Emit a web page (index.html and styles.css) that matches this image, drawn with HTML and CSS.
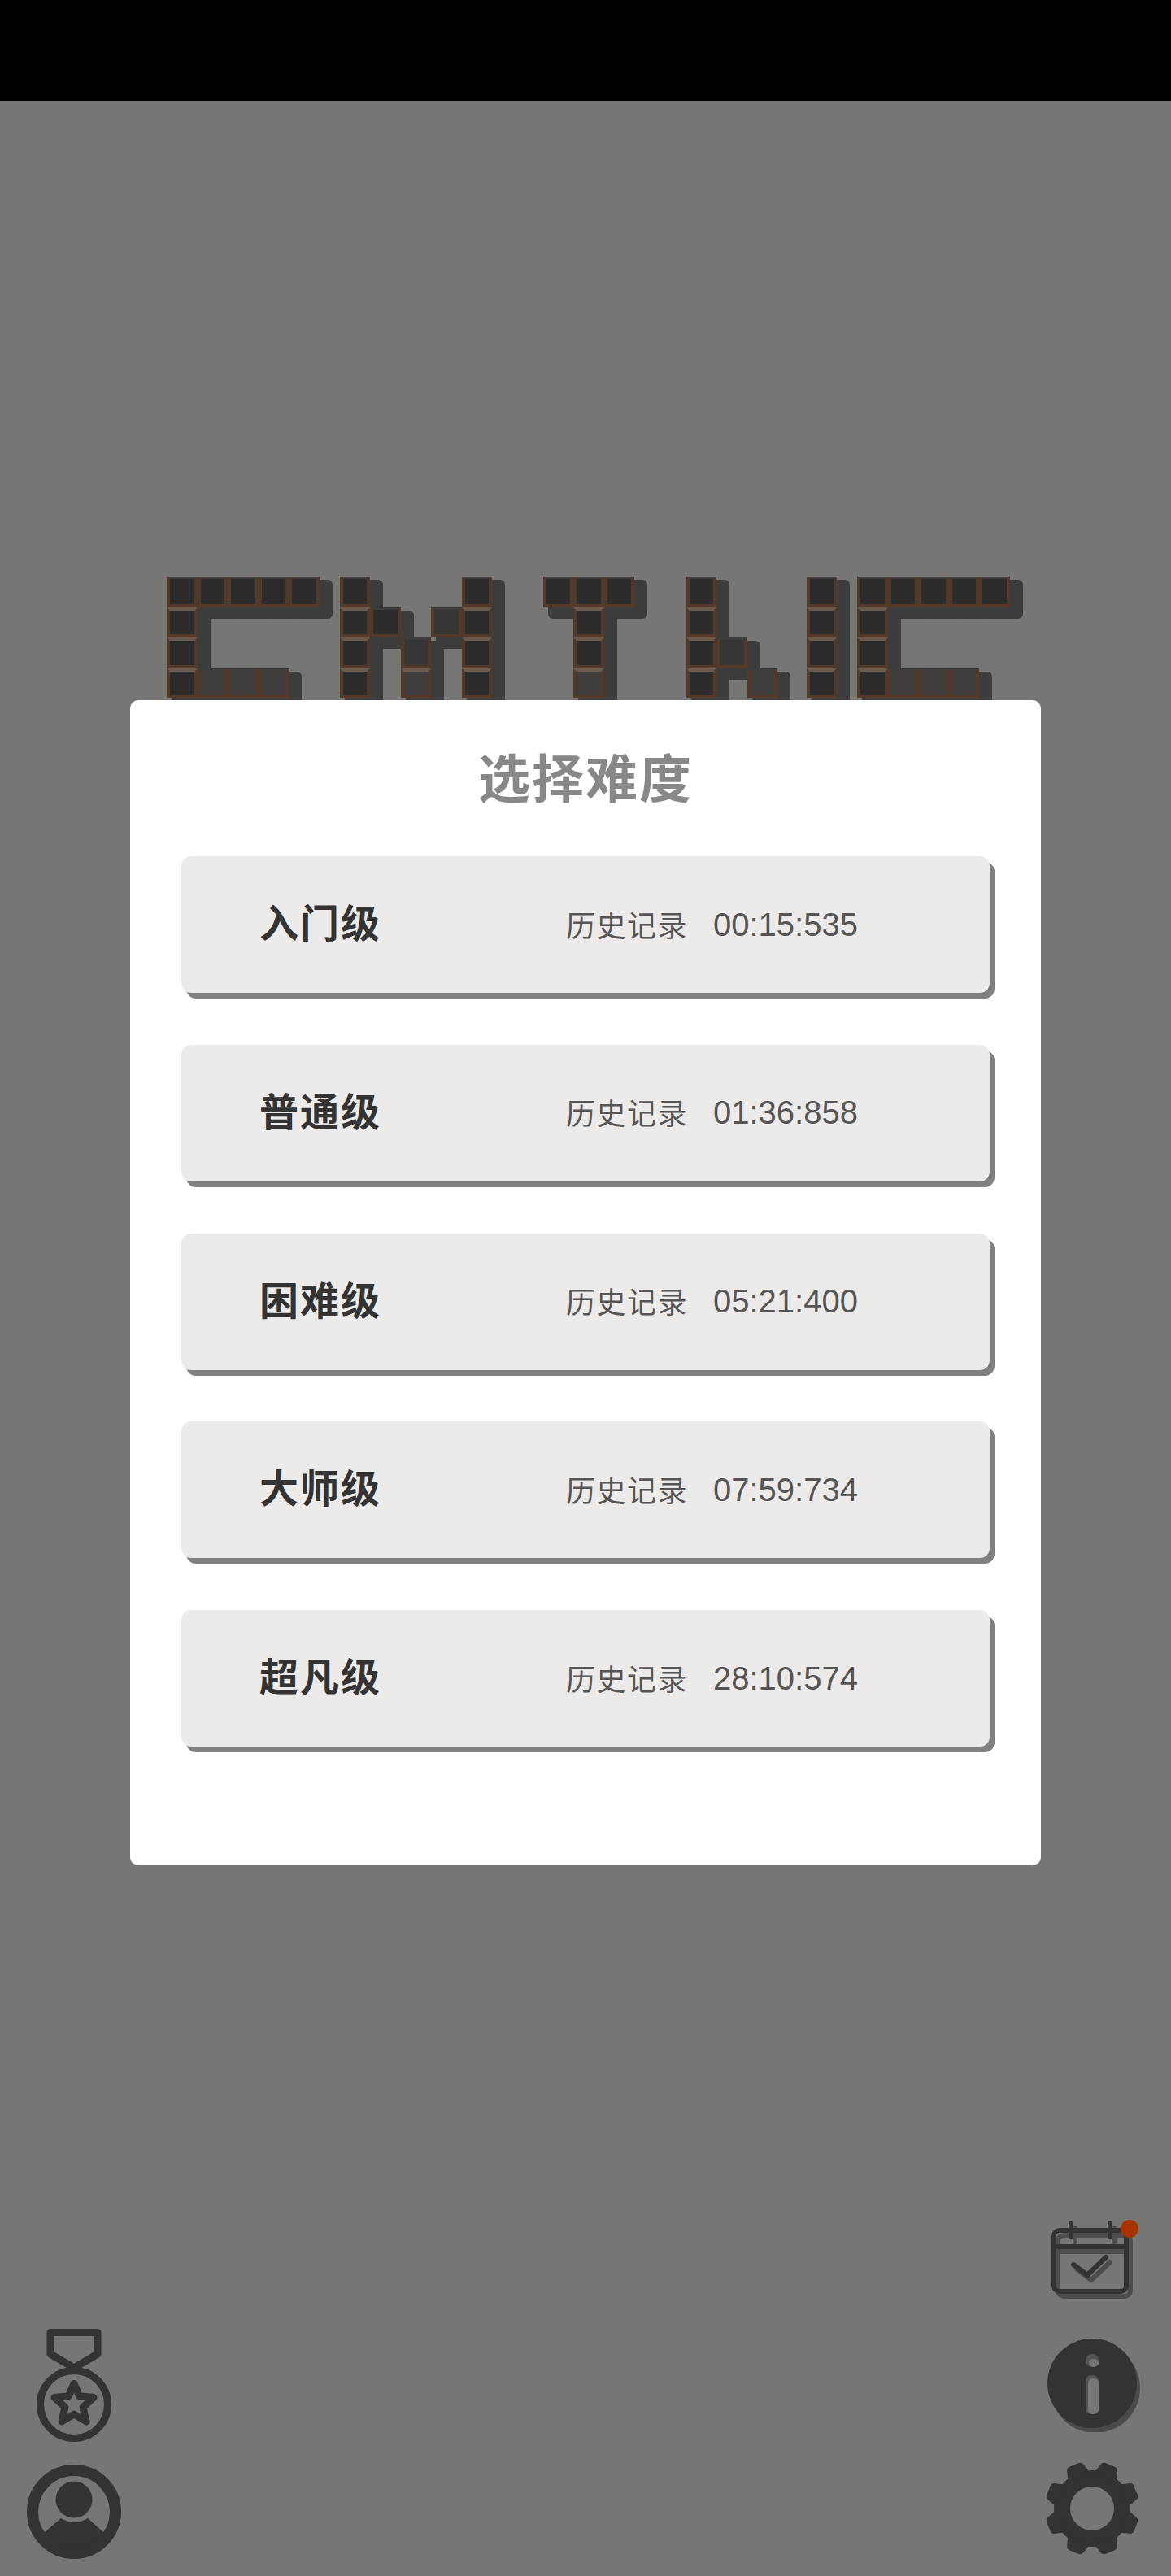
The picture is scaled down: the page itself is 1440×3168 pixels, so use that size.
FILE: index.html
```
<!DOCTYPE html>
<html lang="zh">
<head>
<meta charset="utf-8">
<title>选择难度</title>
<link rel="stylesheet" href="styles.css">
</head>
<body>
<div class="stage">
  <div class="statusbar"></div>

  <div class="logo">
    <div class="letter cols5">
      <b class="t"></b><b class="t"></b><b class="t"></b><b class="t"></b><b class="t"></b>
      <b class="t s"></b><i></i><i></i><i></i><i></i>
      <b class="t s"></b><i></i><i></i><i></i><i></i>
      <b class="t s"></b><b class="t l"></b><b class="t l"></b><b class="t l"></b><i></i>
    </div>
    <div class="letter cols5 m">
      <b class="t"></b><i></i><i></i><i></i><b class="t"></b>
      <b class="t s"></b><b class="t"></b><i></i><b class="t m2"></b><b class="t s"></b>
      <b class="t s"></b><i></i><b class="t m2"></b><i></i><b class="t s"></b>
      <b class="t s"></b><i></i><b class="t l s"></b><i></i><b class="t s"></b>
    </div>
    <div class="letter cols3 tt">
      <b class="t"></b><b class="t"></b><b class="t"></b>
      <i></i><b class="t s"></b><i></i>
      <i></i><b class="t s"></b><i></i>
      <i></i><b class="t l s"></b><i></i>
    </div>
    <div class="letter cols3 k">
      <b class="t"></b><i></i><i></i>
      <b class="t s"></b><i></i><i></i>
      <b class="t s"></b><b class="t m2"></b><i></i>
      <b class="t s"></b><i></i><b class="t l"></b>
    </div>
    <div class="letter cols1 ii">
      <b class="t"></b>
      <b class="t s"></b>
      <b class="t s"></b>
      <b class="t s"></b>
    </div>
    <div class="letter cols5">
      <b class="t"></b><b class="t"></b><b class="t"></b><b class="t"></b><b class="t"></b>
      <b class="t s"></b><i></i><i></i><i></i><i></i>
      <b class="t s"></b><i></i><i></i><i></i><i></i>
      <b class="t s"></b><b class="t l"></b><b class="t l"></b><b class="t l"></b><i></i>
    </div>
  </div>

  <div class="dock">
    <div class="dock-left">
      <svg class="ico-medal" viewBox="0 0 92 140" width="92" height="140" aria-hidden="true">
        <path class="line9" d="M17 4.5H75V31L46 48L17 31Z"/>
        <circle class="line9" cx="46" cy="93" r="41.5"/>
        <path class="line9" d="M46 67.5L52.5 82.600L70 84.500L57 96.500L61 114L46 105L31 114L35 96.500L22 84.500L39.500 82.600Z"/>
      </svg>
      <svg class="ico-user" viewBox="0 0 116 116" width="116" height="116" aria-hidden="true">
        <circle class="line14" cx="58" cy="58" r="51"/>
        <circle class="solid" cx="58" cy="43" r="22.500"/>
        <path class="solid" d="M21 84L42 66Q58 76 75 66L95 84A45 45 0 0 1 21 84Z"/>
      </svg>
    </div>
    <div class="dock-right">
      <svg class="ico-cal" viewBox="0 0 112 100" width="112" height="100" aria-hidden="true">
        <g class="cal-shade">
          <rect x="3" y="13" width="89" height="75" rx="7"/>
          <path d="M3 33H92M24 4V21M72 4V21M27 55L44 68L67 46"/>
        </g>
        <g class="cal-main">
          <rect x="3" y="13" width="89" height="75" rx="7"/>
          <path d="M3 33H92M24 4V21M72 4V21M27 55L44 68L67 46"/>
        </g>
        <circle class="dot" cx="96" cy="11" r="11"/>
      </svg>
      <svg class="ico-info" viewBox="0 0 120 120" width="120" height="120" aria-hidden="true">
        <circle class="shade" cx="64" cy="66" r="55"/>
        <circle class="solid" cx="60" cy="60" r="55"/>
        <circle class="i-dark" cx="60" cy="32" r="8"/>
        <ellipse class="i-light" cx="62" cy="35" rx="6" ry="5"/>
        <rect class="i-dark" x="52" y="50" width="16" height="48" rx="7"/>
        <rect class="i-light" x="55" y="54" width="13" height="44" rx="6"/>
      </svg>
      <svg class="ico-gear" viewBox="-60 -60 120 120" width="120" height="120" aria-hidden="true">
        <circle class="gear-ring" r="37"/>
        <g class="solid">
          <path transform="rotate(22.500)" d="M-15 -41L-11 -54Q-10 -58 -6 -58L6 -58Q10 -58 11 -54L15 -41Z"/>
          <path transform="rotate(67.500)" d="M-15 -41L-11 -54Q-10 -58 -6 -58L6 -58Q10 -58 11 -54L15 -41Z"/>
          <path transform="rotate(112.500)" d="M-15 -41L-11 -54Q-10 -58 -6 -58L6 -58Q10 -58 11 -54L15 -41Z"/>
          <path transform="rotate(157.500)" d="M-15 -41L-11 -54Q-10 -58 -6 -58L6 -58Q10 -58 11 -54L15 -41Z"/>
          <path transform="rotate(202.500)" d="M-15 -41L-11 -54Q-10 -58 -6 -58L6 -58Q10 -58 11 -54L15 -41Z"/>
          <path transform="rotate(247.500)" d="M-15 -41L-11 -54Q-10 -58 -6 -58L6 -58Q10 -58 11 -54L15 -41Z"/>
          <path transform="rotate(292.500)" d="M-15 -41L-11 -54Q-10 -58 -6 -58L6 -58Q10 -58 11 -54L15 -41Z"/>
          <path transform="rotate(337.500)" d="M-15 -41L-11 -54Q-10 -58 -6 -58L6 -58Q10 -58 11 -54L15 -41Z"/>
        </g>
      </svg>
    </div>
  </div>

  <section class="modal">
    <h1 class="modal-title">选择难度</h1>
    <ul class="levels">
      <li class="level"><span class="level-name">入门级</span><span class="level-hist">历史记录</span><span class="level-time">00:15:535</span></li>
      <li class="level"><span class="level-name">普通级</span><span class="level-hist">历史记录</span><span class="level-time">01:36:858</span></li>
      <li class="level"><span class="level-name">困难级</span><span class="level-hist">历史记录</span><span class="level-time">05:21:400</span></li>
      <li class="level"><span class="level-name">大师级</span><span class="level-hist">历史记录</span><span class="level-time">07:59:734</span></li>
      <li class="level"><span class="level-name">超凡级</span><span class="level-hist">历史记录</span><span class="level-time">28:10:574</span></li>
    </ul>
  </section>
</div>
</body>
</html>
```

FILE: styles.css
```
* { box-sizing: border-box; }
html, body { margin: 0; padding: 0; }
body { background: #767674; font-family: "Noto Sans CJK SC", "Noto Sans", sans-serif; }

.stage {
  position: relative;
  width: 1440px;
  height: 3168px;
  overflow: hidden;
  display: flex;
  flex-direction: column;
  background: #767674;
}
.statusbar { height: 124px; background: #000; flex: none; }

/* Logo */
.logo {
  flex: none;
  display: flex;
  gap: 25px;
  margin-top: 585px;
  padding-left: 205px;
  isolation: isolate;
}
.letter { display: grid; grid-auto-rows: 37.5px; }
.cols5 { grid-template-columns: repeat(5, 37.5px); }
.cols3 { grid-template-columns: repeat(3, 37.5px); }
.cols1 { grid-template-columns: 37.5px; }
.tt { margin-left: 37.5px; }
.k { margin-left: 38.5px; }
.ii { margin-left: 10.5px; }
.t {
  position: relative;
  display: block;
  background: #2c2c2c padding-box;
  border: 4px solid #52392a;
  border-top: 3px solid #3c3c3c;
}
.t::before {
  content: "";
  position: absolute;
  z-index: -1;
  left: 2px;
  top: 1px;
  width: 47.5px;
  height: 47.5px;
  border-radius: 6px;
  background: #3c3c3c;
}
.s { border-top: 4px solid #6b5a4c; }
.l { background: #403f3e padding-box; }
.m2 { background: #363636 padding-box; }

/* Bottom dock */
.dock {
  margin-top: auto;
  flex: none;
  display: flex;
  justify-content: space-between;
  align-items: flex-end;
  padding: 0 35px 23px 33px;
}
.dock-left {
  display: flex;
  flex-direction: column;
  align-items: center;
  gap: 27px;
  width: 116px;
  margin-bottom: -2px;
}
.dock-right {
  display: flex;
  flex-direction: column;
  align-items: flex-start;
  width: 122px;
}
.dock svg { display: block; flex: none; }
.ico-cal { margin-left: 10px; margin-bottom: 41px; }
.ico-info { margin-bottom: 34px; }

.line9 { fill: none; stroke: #333; stroke-width: 9; stroke-linejoin: round; }
.line14 { fill: none; stroke: #333; stroke-width: 14; }
.solid { fill: #333; }
.shade { fill: #4a4a4a; }
.cal-main, .cal-shade { fill: none; stroke-width: 6; stroke-linecap: round; stroke-linejoin: round; }
.cal-main { stroke: #333; }
.cal-shade { stroke: #4d4d4d; transform: translate(5px, 6px); }
.dot { fill: #a83200; }
.i-dark { fill: #555; }
.i-light { fill: #767674; }
.gear-ring { fill: none; stroke: #333; stroke-width: 20; }

/* Modal */
.modal {
  position: absolute;
  left: 160px;
  top: 861px;
  width: 1120px;
  height: 1433px;
  padding: 0 63px;
  background: #fff;
  border-radius: 10px;
}
.modal-title {
  margin: 0;
  height: 192px;
  padding-top: 44px;
  text-align: center;
  font-size: 64px;
  line-height: 96px;
  font-weight: 700;
  letter-spacing: 2px;
  color: #888;
}
.levels {
  list-style: none;
  margin: 0;
  padding: 0;
  display: flex;
  flex-direction: column;
  gap: 63.75px;
}
.level {
  height: 168px;
  width: 994px;
  display: flex;
  align-items: center;
  padding-left: 96px;
  background: #ecebea;
  border-radius: 12px;
  box-shadow: 6px 7px 0 #808080;
}
.level-name {
  width: 377px;
  flex: none;
  padding-bottom: 10px;
  font-size: 48px;
  font-weight: 700;
  letter-spacing: 2px;
  color: #333;
}
.level-hist {
  width: 181px;
  flex: none;
  padding-bottom: 3px;
  font-size: 36px;
  letter-spacing: 1.5px;
  color: #555;
}
.level-time {
  font-family: "Liberation Sans", Arial, sans-serif;
  font-size: 40px;
  color: #555;
}
```
